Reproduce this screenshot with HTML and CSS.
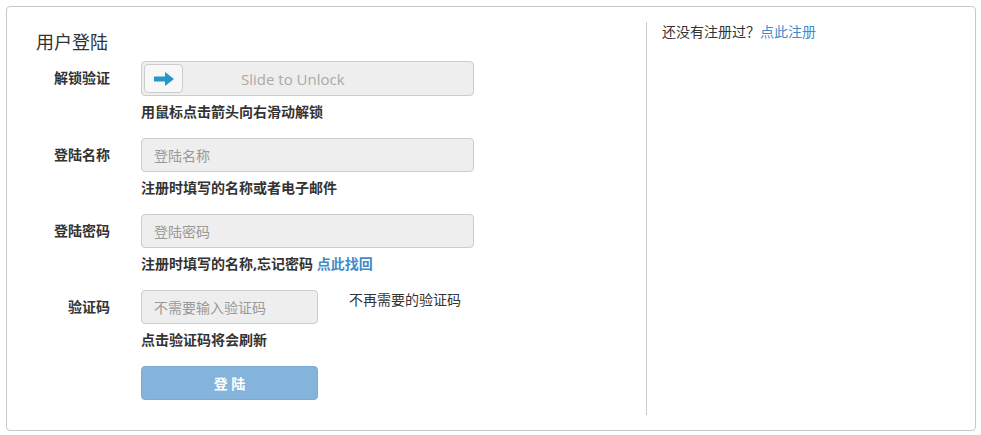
FILE: index.html
```html
<!DOCTYPE html>
<html lang="zh-CN">
  <head>
    <meta charset="UTF-8" />
    <meta name="viewport" content="width=device-width, initial-scale=1.0" />
    <title>用户登陆</title>
    <link rel="stylesheet" href="styles.css">
  </head>
  <body>
    <div class="panel">
      <div class="login-col">
        <h3 class="title">用户登陆</h3>

        <div class="form-row">
          <label class="form-label">解锁验证</label>
          <div class="form-field">
            <div class="slider">
              <span class="slider-handle">
                <svg width="20" height="14" viewBox="0 0 20 14">
                  <path d="M0 4.5 H11 V0 L20 7 L11 14 V9.5 H0 Z" fill="#2796c9" />
                </svg>
              </span>
              <span class="slider-text">Slide to Unlock</span>
            </div>
            <div class="help">用鼠标点击箭头向右滑动解锁</div>
          </div>
        </div>

        <div class="form-row">
          <label class="form-label" for="username">登陆名称</label>
          <div class="form-field">
            <input class="form-input" id="username" type="text" placeholder="登陆名称" disabled />
            <div class="help">注册时填写的名称或者电子邮件</div>
          </div>
        </div>

        <div class="form-row">
          <label class="form-label" for="password">登陆密码</label>
          <div class="form-field">
            <input class="form-input" id="password" type="password" placeholder="登陆密码" disabled />
            <div class="help">注册时填写的名称,忘记密码 <a href="#">点此找回</a></div>
          </div>
        </div>

        <div class="form-row">
          <label class="form-label" for="captcha">验证码</label>
          <div class="form-field">
            <div class="captcha-line">
              <input class="form-input short" id="captcha" type="text" placeholder="不需要输入验证码" disabled />
              <span class="captcha-note">不再需要的验证码</span>
            </div>
            <div class="help">点击验证码将会刷新</div>
          </div>
        </div>

        <div class="form-row">
          <span class="form-label"></span>
          <div class="form-field">
            <button class="btn-login" disabled>登 陆</button>
          </div>
        </div>
      </div>

      <div class="side-col">
        还没有注册过？<a href="#">点此注册</a>
      </div>
    </div>
  </body>
</html>
```

FILE: styles.css
```css
body {
  margin: 0;
  padding: 6px 5px 6px 6px;
  font-family: "Open Sans", "Noto Sans CJK SC", sans-serif;
  font-size: 14px;
  color: #333;
}
a {
  color: #428bca;
  text-decoration: none;
}
.panel {
  display: flex;
  border: 1px solid #c8c8c8;
  border-radius: 4px;
  padding: 15px;
}
.login-col {
  flex: 1;
  padding: 8px 0 15px 0;
}
.side-col {
  width: 298px;
  border-left: 1px solid #ccc;
  padding-left: 15px;
  line-height: 20px;
}
.title {
  margin: 0 0 7px 14px;
  font-size: 18px;
  font-weight: normal;
  line-height: 24px;
}
.form-row {
  display: flex;
  margin-bottom: 16px;
}
.form-row:last-child {
  margin-bottom: 0;
}
.form-label {
  width: 88px;
  margin-right: 31px;
  text-align: right;
  font-weight: bold;
  line-height: 34px;
}
.form-field {
  display: flex;
  flex-direction: column;
}
.help {
  margin-top: 6px;
  line-height: 20px;
  font-weight: bold;
}
.slider {
  display: flex;
  align-items: center;
  box-sizing: border-box;
  width: 333px;
  height: 35px;
  padding: 2px;
  background-color: #eee;
  border: 1px solid #ccc;
  border-radius: 4px;
}
.slider-handle {
  display: flex;
  align-items: center;
  justify-content: center;
  box-sizing: border-box;
  width: 39px;
  height: 29px;
  background-color: #f7f7f7;
  border: 1px solid #ccc;
  border-radius: 4px;
}
.slider-text {
  margin-left: 58px;
  font-size: 15px;
  color: #aaa;
}
.form-input {
  box-sizing: border-box;
  width: 333px;
  height: 34px;
  padding: 6px 12px;
  font-family: inherit;
  font-size: 14px;
  color: #555;
  background-color: #eee;
  border: 1px solid #ccc;
  border-radius: 4px;
}
.form-input::placeholder {
  color: #999;
}
.form-input.short {
  width: 177px;
}
.captcha-line {
  display: flex;
  align-items: flex-start;
}
.captcha-note {
  margin-left: 31px;
  line-height: 20px;
}
.btn-login {
  width: 177px;
  height: 34px;
  font-family: inherit;
  font-size: 14px;
  font-weight: bold;
  color: #fff;
  background-color: #84b3dc;
  border: 1px solid #7babd4;
  border-radius: 4px;
}
```
